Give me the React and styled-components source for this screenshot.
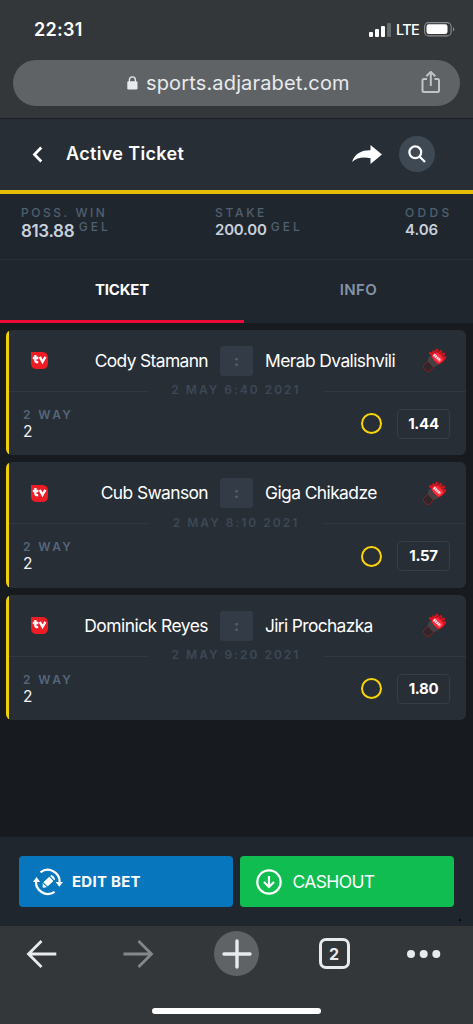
import React from 'react';
import styled, { createGlobalStyle } from 'styled-components';

const Global = createGlobalStyle`
  * { box-sizing: border-box; }
  body { margin: 0; background: #16191d; font-family: Inter, "Liberation Sans", sans-serif; }
  svg { display: block; flex: none; }
`;

const Screen = styled.div`
  width: 473px;
  height: 1024px;
  overflow: hidden;
  display: flex;
  flex-direction: column;
  background: #171a1f;
  color: #fff;
`;

const Text = styled.span`
  display: block;
  white-space: nowrap;
  font-size: ${(p) => p.$size}px;
  line-height: ${(p) => p.$line || 16}px;
  font-weight: ${(p) => p.$weight || 400};
  letter-spacing: ${(p) => p.$track || 0}px;
  color: ${(p) => p.$color || '#fff'};
`;

/* Browser chrome */
const BrowserTop = styled.header`
  flex: none;
  height: 119px;
  background: #343739;
  border-bottom: 1.5px solid #1b1e22;
  padding: 0 13px;
`;
const StatusBar = styled.div`
  height: 60px;
  display: flex;
  justify-content: space-between;
  align-items: center;
  padding: 0 5px 1px 21px;
`;
const StatusIcons = styled.div`
  display: flex;
  align-items: center;
  gap: 5px;
`;
const AddressBar = styled.div`
  height: 46px;
  border-radius: 23px;
  background: #5f6366;
  display: grid;
  grid-template-columns: 114px 11px 1fr 39px;
  align-items: center;
`;
const Url = styled(Text)`
  padding-left: 8px;
`;

/* Page header */
const PageHeader = styled.div`
  flex: none;
  height: 74.5px;
  background: #272e35;
  border-bottom: 4px solid #e5bd08;
  display: flex;
  align-items: center;
  padding: 0 38px 0 32px;
`;
const Title = styled(Text)`
  flex: 1;
  margin-left: 23px;
`;
const SearchButton = styled.div`
  width: 36px;
  height: 36px;
  border-radius: 50%;
  background: #3e4954;
  display: flex;
  align-items: center;
  justify-content: center;
  margin-left: 17px;
`;

const Summary = styled.div`
  flex: none;
  height: 66.5px;
  background: #20262d;
  border-bottom: 1px solid #272e35;
  display: grid;
  grid-template-columns: 194px 190px 1fr;
  padding: 11px 0 0 21px;
`;
const Amount = styled.div`
  display: flex;
  align-items: flex-start;
  gap: ${(p) => p.$gap}px;
`;

const Tabs = styled.div`
  flex: none;
  height: 63px;
  background: #20262d;
  display: grid;
  grid-template-columns: 244px 1fr;
`;
const Tab = styled.div`
  display: flex;
  align-items: center;
  justify-content: center;
  border-bottom: ${(p) => (p.$active ? '3px solid #ed0a35' : '0')};
  padding-bottom: ${(p) => (p.$active ? 1 : 4)}px;
`;

/* Bet cards */
const Bets = styled.main`
  flex: 1;
  display: flex;
  flex-direction: column;
  gap: 7px;
  padding: 6.5px 7px 0 6px;
`;
const Card = styled.article`
  height: 125.5px;
  border-radius: 6px;
  background: linear-gradient(90deg, #f2cf0b 0 3px, #272e35 3px);
  padding-left: 3px;
`;
const Match = styled.div`
  height: 52px;
  padding-top: 10px;
  display: grid;
  grid-template-columns: 60px 139px 12px 33px 12px 157px 1fr;
  align-items: center;
`;
const TvCell = styled.div`
  padding-left: 22px;
`;
const Home = styled(Text)`
  text-align: right;
`;
const Versus = styled.div`
  height: 30px;
  border-radius: 3px;
  background: #333c46;
  display: flex;
  align-items: center;
  justify-content: center;
`;
const DateRow = styled.div`
  height: 18px;
  display: grid;
  grid-template-columns: 139px 1fr 142px;
  align-items: center;
`;
const Rule = styled.div`
  height: 1px;
  background: #303843;
  margin-top: 1px;
`;
const DateText = styled(Text)`
  text-align: center;
  margin-top: -1px;
`;
const Market = styled.div`
  display: flex;
  align-items: center;
  padding: 5px 16px 0 14px;
`;
const Pick = styled.div`
  flex: 1;
`;
const StatusRing = styled.div`
  width: 21px;
  height: 21px;
  border-radius: 50%;
  border: 2px solid #fad507;
`;
const OddsBox = styled.div`
  width: 53px;
  height: 30px;
  margin: 4px 0 4px 15px;
  border: 1px solid #343d49;
  border-radius: 4px;
  display: flex;
  align-items: center;
  justify-content: center;
`;

/* Actions */
const Actions = styled.div`
  flex: none;
  position: relative;
  height: 89px;
  background: #20262d;
  display: grid;
  grid-template-columns: 214px 214.5px;
  gap: 6.5px;
  padding: 19px 0 0 19px;
`;
const Speck = styled.i`
  position: absolute;
  right: 12px;
  bottom: 5px;
  width: 2px;
  height: 2px;
  background: #0a0c0e;
`;
const ActionButton = styled.div`
  height: 51px;
  border-radius: 4px;
  background: ${(p) => p.$bg};
  display: flex;
  align-items: center;
  padding-left: ${(p) => p.$inset}px;
  gap: ${(p) => p.$gap}px;
`;

const BrowserBottom = styled.footer`
  flex: none;
  height: 98px;
  background: #343739;
`;
const NavRow = styled.div`
  height: 82px;
  padding: 5px 0 0 25.5px;
  display: grid;
  grid-template-columns: 97px 91.5px 104.5px 88px 1fr;
  align-items: start;
`;
const NavItem = styled.div`
  height: 45px;
  display: flex;
  align-items: center;
`;
const NewTab = styled(NavItem)`
  width: 45px;
  border-radius: 50%;
  background: #5f6366;
  justify-content: center;
`;
const TabCount = styled.div`
  width: 31px;
  height: 31px;
  border: 3px solid #e8eaed;
  border-radius: 7px;
  display: flex;
  align-items: center;
  justify-content: center;
`;
const HomeBar = styled.div`
  width: 169px;
  height: 6px;
  border-radius: 3px;
  background: #fff;
  margin: 0 auto;
`;

const TvIcon = () => (
  <svg width="17" height="17" viewBox="0 0 17 17">
    <path d="M0 0H11.5Q17 0 17 6V11Q17 17 11 17H6Q0 17 0 11Z" fill="#ee1c25" />
    <g fill="none" stroke="#fff" strokeWidth="2.3">
      <path d="M4.4 3V9Q4.4 10.5 7.2 10.1M1.8 6H7.4" />
      <path d="M8.8 4.9L11.5 9.9L14.4 4.9" />
    </g>
  </svg>
);

const GloveIcon = () => (
  <svg width="25" height="25" viewBox="0 0 25 25">
    <path d="M1.3 17.8L6 13.2L11.5 19.2L7.2 23.8Q5 24.2 3.2 21.7Q.8 19.3 1.3 17.8Z" fill="#30272b" stroke="#8e1d25" strokeWidth="1" />
    <path d="M5.5 12.8L6.5 9L9.5 7.2L16 14.5L16.5 17L11.8 19.2Z" fill="#434144" />
    <path d="M9 7L6.7 6L7.5 3.8L10 4.6L10.8 1.9L13 3L14.2 .6L16.4 1.5L16.6 3.8L18.8 1.8L20.4 3.4L19.8 5.5L22.3 4.3L23.3 6.3L21.8 8L24.3 8.4L23.8 10.8L22.2 12.5L20 14.8L16.5 16.5Q10.5 12 9 7Z" fill="#d4131e" />
    <path d="M9.5 8Q12.5 3.7 15.5 4.7Q20.5 7.7 21.6 12Q19 15.5 16 15.6Q11 12 9.5 8Z" fill="#ff2a3b" />
    <path d="M11.8 6.6L18.4 12.6" stroke="#fff" strokeWidth="2.8" strokeDasharray="1.7 .4" opacity=".86" />
    <path d="M14.2 4.2L16.4 3.1M17.5 6L19.3 4.5M19.8 8.2L21.8 7.2" stroke="#7e1118" strokeWidth=".7" />
  </svg>
);

const EditIcon = () => (
  <svg width="30" height="28" viewBox="0 0 30 28">
    <g fill="none" stroke="#fff" strokeWidth="2.2">
      <path d="M7.5 4.3A11.9 11.9 0 0 1 26.6 14.3" />
      <path d="M3.2 12A11.9 11.9 0 0 0 21.6 23.8" />
    </g>
    <path d="M0 14L3.5 9L7.2 14ZM22.7 14H30L26.3 18.8Z" fill="#fff" />
    <path d="M10.4 14.2L16.3 8.8L20.4 13L14.6 18.6ZM17.2 8L18.3 7Q21.7 8.5 22 11.4L21.2 12.2ZM9.7 15L13.7 19.2L9.7 19.7Z" fill="#fff" />
  </svg>
);

const bets = [
  { home: 'Cody Stamann', guest: 'Merab Dvalishvili', date: '2 MAY 6:40 2021', odds: '1.44', homeTrack: -0.62, guestTrack: -0.57 },
  { home: 'Cub Swanson', guest: 'Giga Chikadze', date: '2 MAY 8:10 2021', odds: '1.57', homeTrack: -0.6, guestTrack: -0.57 },
  { home: 'Dominick Reyes', guest: 'Jiri Prochazka', date: '2 MAY 9:20 2021', odds: '1.80', homeTrack: -0.5, guestTrack: -0.65 },
];

const Bet = ({ bet }) => (
  <Card>
    <Match>
      <TvCell><TvIcon /></TvCell>
      <Home $size={17.4} $line={22} $track={bet.homeTrack}>{bet.home}</Home>
      <span />
      <Versus><Text $size={15} $weight={700} $color="#506176">:</Text></Versus>
      <span />
      <Text $size={17.4} $line={22} $track={bet.guestTrack}>{bet.guest}</Text>
      <GloveIcon />
    </Match>
    <DateRow>
      <Rule />
      <DateText $size={12} $weight={600} $track={2} $color="#3d4855">{bet.date}</DateText>
      <Rule />
    </DateRow>
    <Market>
      <Pick>
        <Text $size={12} $weight={600} $track={2.4} $color="#55667c">2 WAY</Text>
        <Text $size={15.5} $line={18} $color="#f3f5f6">2</Text>
      </Pick>
      <StatusRing />
      <OddsBox><Text $size={15} $weight={700} $track={-0.3}>{bet.odds}</Text></OddsBox>
    </Market>
  </Card>
);

export default function App() {
  return (
    <Screen>
      <Global />
      <BrowserTop>
        <StatusBar>
          <Text $size={18} $line={22} $weight={600} $track={0.3}>22:31</Text>
          <StatusIcons>
            <svg width="22" height="14" viewBox="0 0 22 14" fill="#fff">
              <rect x="0" y="9" width="4" height="5" rx="1" />
              <rect x="6" y="6" width="4" height="8" rx="1" />
              <rect x="12" y="3" width="4" height="11" rx="1" />
              <rect x="18" y="0" width="4" height="14" rx="1" fill="#66696b" />
            </svg>
            <Text $size={14.5} $weight={500} $track={-0.7}>LTE</Text>
            <svg width="31" height="15" viewBox="0 0 31 15">
              <rect x=".6" y=".6" width="26.5" height="13.3" rx="4" fill="none" stroke="#8c8e8f" strokeWidth="1.1" />
              <rect x="2.5" y="2.3" width="21" height="9.8" rx="2.3" fill="#fff" />
              <path d="M29 5Q31.5 7.2 29 9.5Z" fill="#8c8e8f" />
            </svg>
          </StatusIcons>
        </StatusBar>
        <AddressBar>
          <span />
          <svg width="11" height="14" viewBox="0 0 11 14">
            <rect x=".3" y="5.2" width="10.2" height="8.3" rx="1.3" fill="#e8eaed" />
            <path d="M2.4 6V3.9A3 3 0 0 1 8.4 3.9V6" fill="none" stroke="#e8eaed" strokeWidth="1.3" />
          </svg>
          <Url $size={20} $line={26} $track={0.15} $color="#e8eaed">sports.adjarabet.com</Url>
          <svg width="20" height="24" viewBox="0 0 20 24" fill="none" stroke="#c1c4c7" strokeWidth="2">
            <path d="M6 8H3Q1.5 8 1.5 9.5V19.5Q1.5 21 3 21H16.5Q18 21 18 19.5V9.5Q18 8 16.5 8H13.5M9.8 15V1M5.3 5.2L9.8 .9L14.3 5.2" />
          </svg>
        </AddressBar>
      </BrowserTop>

      <PageHeader>
        <svg width="11" height="17" viewBox="0 0 11 17">
          <path d="M9.3 1.5L2.5 8.5L9.3 15.5" fill="none" stroke="#fff" strokeWidth="2.8" />
        </svg>
        <Title $size={18} $line={22} $weight={600} $track={0.35}>Active Ticket</Title>
        <svg width="30" height="19" viewBox="0 0 30 19">
          <path d="M0 17C3 8 10 5 18.5 5.2V0L30 9.5L18.5 19V13.2C11 11.5 5 12.5 0 17Z" fill="#fff" />
        </svg>
        <SearchButton>
          <svg width="18" height="18" viewBox="0 0 18 18" fill="none" stroke="#fff" strokeWidth="2.2">
            <circle cx="7.3" cy="7.3" r="5.9" />
            <path d="M11.5 11.5L17 17" />
          </svg>
        </SearchButton>
      </PageHeader>

      <Summary>
        <div>
          <Text $size={12} $weight={500} $track={2.55} $color="#506071">POSS. WIN</Text>
          <Amount $gap={4.5}>
            <Text $size={17} $line={21} $weight={600} $track={-0.35} $color="#c8d0dc">813.88</Text>
            <Text $size={12} $line={12} $weight={500} $track={3} $color="#506071">GEL</Text>
          </Amount>
        </div>
        <div>
          <Text $size={12} $weight={500} $track={2.7} $color="#506071">STAKE</Text>
          <Amount $gap={4}>
            <Text $size={15} $line={18} $weight={600} $track={-0.2} $color="#c8d0dc">200.00</Text>
            <Text $size={12} $line={12} $weight={500} $track={3} $color="#506071">GEL</Text>
          </Amount>
        </div>
        <div>
          <Text $size={12} $weight={500} $track={3.3} $color="#506071">ODDS</Text>
          <Text $size={15} $line={18} $weight={600} $track={-0.1} $color="#c8d0dc">4.06</Text>
        </div>
      </Summary>

      <Tabs>
        <Tab $active><Text $size={15} $weight={700} $track={-0.2}>TICKET</Text></Tab>
        <Tab><Text $size={15} $weight={600} $track={0.4} $color="#8393aa">INFO</Text></Tab>
      </Tabs>

      <Bets>
        {bets.map((bet) => <Bet key={bet.home} bet={bet} />)}
      </Bets>

      <Actions>
        <ActionButton $bg="#0876bd" $inset={14} $gap={9}>
          <EditIcon />
          <Text $size={15} $weight={700} $track={0.25}>EDIT BET</Text>
        </ActionButton>
        <ActionButton $bg="#10bd50" $inset={16} $gap={11}>
          <svg width="26" height="26" viewBox="0 0 26 26" fill="none" stroke="#fff" strokeWidth="2.2">
            <circle cx="13" cy="13" r="11.7" />
            <path d="M13 7V18M8 13L13 18L18 13" />
          </svg>
          <Text $size={17.5} $line={22} $track={-0.65}>CASHOUT</Text>
        </ActionButton>
        <Speck />
      </Actions>

      <BrowserBottom>
        <NavRow>
          <NavItem>
            <svg width="31" height="28" viewBox="0 0 31 28" fill="none" stroke="#e8eaed" strokeWidth="2.8">
              <path d="M30.3 14H3M15.5 1L2.5 14L15.5 27" />
            </svg>
          </NavItem>
          <NavItem>
            <svg width="31" height="28" viewBox="0 0 31 28" fill="none" stroke="#858789" strokeWidth="2.8">
              <path d="M.5 14H28M15.5 1L28.5 14L15.5 27" />
            </svg>
          </NavItem>
          <NewTab>
            <svg width="30" height="30" viewBox="0 0 30 30" stroke="#e8eaed" strokeWidth="3.4" strokeLinecap="round">
              <path d="M15 2V28M2 15H28" />
            </svg>
          </NewTab>
          <NavItem><TabCount><Text $size={16} $weight={700} $color="#e8eaed">2</Text></TabCount></NavItem>
          <NavItem>
            <svg width="34" height="8" viewBox="0 0 34 8" fill="#e8eaed">
              <circle cx="4" cy="4" r="4" /><circle cx="16.7" cy="4" r="4" /><circle cx="29.3" cy="4" r="4" />
            </svg>
          </NavItem>
        </NavRow>
        <HomeBar />
      </BrowserBottom>
    </Screen>
  );
}
